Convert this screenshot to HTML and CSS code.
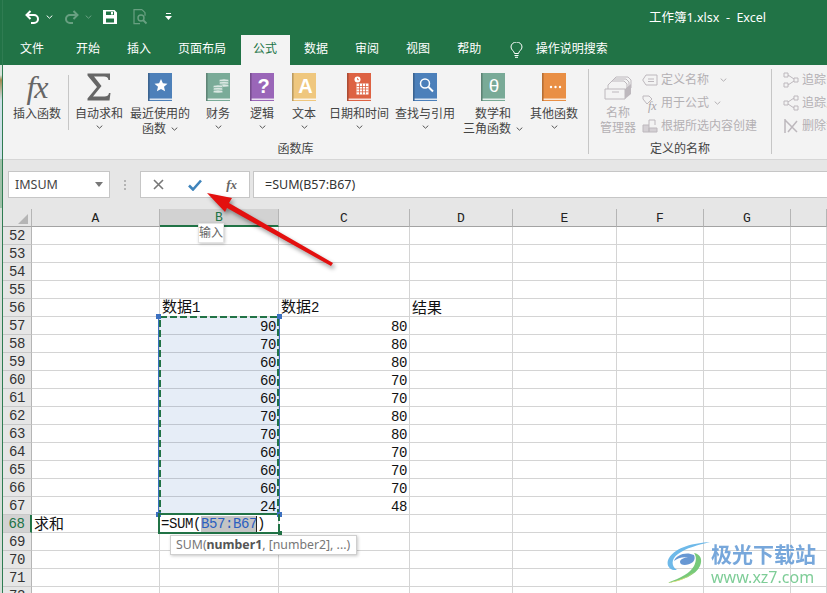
FILE: index.html
```html
<!DOCTYPE html>
<html lang="zh-CN">
<head>
<meta charset="utf-8">
<title>工作簿1.xlsx - Excel</title>
<link rel="stylesheet" href="styles.css">
</head>
<body>
<svg class="defs" width="0" height="0" aria-hidden="true">
  <symbol id="book" viewBox="0 0 24 28">
    <rect width="24" height="28" fill="currentColor"/>
    <rect width="1.6" height="28" fill="#000" opacity=".22"/>
    <rect x="1.6" y="25.6" width="22.4" height="1.2" fill="#fff"/>
  </symbol>
  <symbol id="chev" viewBox="0 0 7 4">
    <path d="M.7.6 3.5 3.2 6.3.6" fill="none" stroke="currentColor" stroke-width="1"/>
  </symbol>
</svg>
<div class="strip"></div>
<div class="main">
  <header class="titlebar">
    <div class="qat">
      <svg class="qi undo" width="15" height="14" viewBox="0 0 15 14"><path d="M5.500 1 1.500 5l4 4" fill="none" stroke="currentColor" stroke-width="2"/><path d="M2 5h7a4 4 0 0 1 0 8H6" fill="none" stroke="currentColor" stroke-width="2"/></svg>
      <svg class="qc" width="7" height="4"><use href="#chev"/></svg>
      <svg class="qi redo dim" width="15" height="14" viewBox="0 0 15 14"><path d="M9.500 1l4 4-4 4" fill="none" stroke="currentColor" stroke-width="2"/><path d="M13 5H6a4 4 0 0 0 0 8h3" fill="none" stroke="currentColor" stroke-width="2"/></svg>
      <svg class="qc dim" width="7" height="4"><use href="#chev"/></svg>
      <svg class="qi save" width="14" height="14" viewBox="0 0 14 14"><path fill-rule="evenodd" fill="currentColor" d="M0 0h11.500L14 2.500V14H0zM3 1.500V5h8V1.500zM3 8.500V12.500h8V8.500z"/><rect x="8" y="2" width="2" height="2.500" fill="currentColor"/></svg>
      <svg class="qi prev dim" width="15" height="16" viewBox="0 0 15 16"><path d="M9 .7H1v14h6M9 .7l3 3v3" fill="none" stroke="currentColor" stroke-width="1.200"/><circle cx="8" cy="9" r="3" fill="none" stroke="currentColor" stroke-width="1.400"/><path d="m10 11 3.500 3.500" stroke="currentColor" stroke-width="1.800"/></svg>
      <svg class="qi cust" width="7" height="7" viewBox="0 0 7 7"><rect x="1" width="5" height="1" fill="currentColor"/><path d="M0 3h7L3.500 7z" fill="currentColor"/></svg>
    </div>
    <div class="doc">工作簿1.xlsx &nbsp;-&nbsp; Excel</div>
  </header>
  <nav class="tabs">
    <span class="tab first">文件</span>
    <span class="tab">开始</span>
    <span class="tab">插入</span>
    <span class="tab">页面布局</span>
    <span class="tab active">公式</span>
    <span class="tab">数据</span>
    <span class="tab">审阅</span>
    <span class="tab">视图</span>
    <span class="tab">帮助</span>
    <span class="tell">
      <svg width="13" height="16" viewBox="0 0 13 16"><path d="M4.500 11.500C4.300 9 1 8 1 5a5.500 5 0 0 1 11 0c0 3-3.300 4-3.500 6.500z" fill="none" stroke="currentColor"/><path d="M4.500 13.500h4M5 15.300h3" stroke="currentColor"/></svg>
      操作说明搜索
    </span>
  </nav>
  <section class="ribbon">
    <div class="group lib">
      <div class="cmds">
        <div class="btn w-fx"><span class="fxbig">fx</span><span class="lbl">插入函数</span></div>
        <span class="vsep inner"></span>
        <div class="btn w-sum">
          <svg class="ic" width="24" height="28" viewBox="0 0 24 28"><path d="M.5.5H23V7h-1.500C21 4 19.500 3.500 17 3.500H7L14.500 13 6 23.500h11.500c2.500 0 4-.8 4.500-3.500h1.500L22.500 27.500H.5v-2L10 14 .5 2.500z" fill="#666"/></svg>
          <span class="lbl">自动求和</span><svg class="chev" width="7" height="4"><use href="#chev"/></svg>
        </div>
        <div class="btn w-rec">
          <svg class="ic c-blue" width="24" height="28"><use href="#book"/><path d="m13 6 1.900 4.300 4.600.4-3.500 3 1.100 4.600-4.100-2.400-4.100 2.400 1.100-4.600-3.500-3 4.600-.4z" fill="#fff"/></svg>
          <span class="lbl">最近使用的<br>函数 <svg class="chev in" width="7" height="4"><use href="#chev"/></svg></span>
        </div>
        <div class="btn w-fin">
          <svg class="ic c-teal" width="24" height="28"><use href="#book"/><g fill="#fff" opacity=".72" stroke="#7aab98" stroke-width=".6"><ellipse cx="18" cy="7.500" rx="5" ry="1.600"/><ellipse cx="18" cy="10" rx="5" ry="1.600"/><ellipse cx="18" cy="12.500" rx="5" ry="1.600"/><ellipse cx="12" cy="13.500" rx="5" ry="1.600"/><ellipse cx="12" cy="16" rx="5" ry="1.600"/><ellipse cx="12" cy="18.500" rx="5" ry="1.600"/></g></svg>
          <span class="lbl">财务</span><svg class="chev" width="7" height="4"><use href="#chev"/></svg>
        </div>
        <div class="btn w-log">
          <svg class="ic c-purple" width="24" height="28"><use href="#book"/><text class="bg-q" x="13.500" y="20">?</text></svg>
          <span class="lbl">逻辑</span><svg class="chev" width="7" height="4"><use href="#chev"/></svg>
        </div>
        <div class="btn w-txt">
          <svg class="ic c-yellow" width="24" height="28"><use href="#book"/><text class="bg-a" x="13.500" y="20">A</text></svg>
          <span class="lbl">文本</span><svg class="chev" width="7" height="4"><use href="#chev"/></svg>
        </div>
        <div class="btn w-dat">
          <svg class="ic c-red" width="24" height="28"><use href="#book"/><circle cx="10.500" cy="6.500" r="3" fill="#fff"/><path d="M10.500 5v1.700h1.500" stroke="#dd6243" fill="none" stroke-width=".8"/><path fill="#fff" d="M9.500 10.500h12v11h-12z"/><path d="M12.500 10.500v11M15.500 10.500v11M18.500 10.500v11M9.500 13.500h12M9.500 16h12M9.500 18.800h12" stroke="#dd6243" stroke-width=".8"/></svg>
          <span class="lbl">日期和时间</span><svg class="chev" width="7" height="4"><use href="#chev"/></svg>
        </div>
        <div class="btn w-look">
          <svg class="ic c-blue2" width="24" height="28"><use href="#book"/><circle cx="12" cy="10.500" r="4.500" fill="none" stroke="#fff" stroke-width="1.500"/><path d="m15.500 14 4.500 4.500" stroke="#fff" stroke-width="2"/></svg>
          <span class="lbl">查找与引用</span><svg class="chev" width="7" height="4"><use href="#chev"/></svg>
        </div>
        <div class="btn w-math">
          <svg class="ic c-teal2" width="24" height="28"><use href="#book"/><text class="bg-t" x="13" y="19">θ</text></svg>
          <span class="lbl">数学和<br>三角函数 <svg class="chev in" width="7" height="4"><use href="#chev"/></svg></span>
        </div>
        <div class="btn w-oth">
          <svg class="ic c-orange" width="24" height="28"><use href="#book"/><circle cx="9" cy="14" r="1.200" fill="#fff"/><circle cx="13.500" cy="14" r="1.200" fill="#fff"/><circle cx="18" cy="14" r="1.200" fill="#fff"/></svg>
          <span class="lbl">其他函数</span><svg class="chev" width="7" height="4"><use href="#chev"/></svg>
        </div>
      </div>
      <div class="glabel">函数库</div>
    </div>
    <span class="vsep"></span>
    <div class="group names">
      <div class="cmds">
        <div class="btn off w-mgr">
          <svg class="ic" width="28" height="24" viewBox="0 0 28 24"><g fill="#f3f3f3" stroke="#bdb8bd"><path d="M8 5 12 1h12l3 3v8H8z"/><path d="M6 7l4-4h12l3 3v8H6z"/><path d="M4 9l4-4h12l3 3v8H4z"/></g><path d="M1 13h20v10H1z" fill="#f3f3f3" stroke="#bdb8bd"/><path d="M21 13l6-5v10l-6 5z" fill="#bdb8bd"/><path d="M8 16h7" stroke="#bdb8bd"/></svg>
          <span class="lbl">名称<br>管理器</span>
        </div>
        <div class="smalls">
          <div class="sm"><svg width="16" height="12" viewBox="0 0 16 12"><path d="M4 1h11v10H4L.7 6z" fill="none" stroke="#bdb8bd"/><path d="M6 5h6M6 7.500h6" stroke="#bdb8bd"/></svg><span>定义名称</span><svg class="chev m1" width="7" height="4"><use href="#chev"/></svg></div>
          <div class="sm"><svg width="16" height="16" viewBox="0 0 16 16"><path d="M1 4V1h6l3 3-5 5z" fill="none" stroke="#bdb8bd"/><text class="sfx" x="6" y="15">fx</text></svg><span>用于公式</span><svg class="chev m2" width="7" height="4"><use href="#chev"/></svg></div>
          <div class="sm"><svg width="16" height="14" viewBox="0 0 16 14"><path d="M1 6h6v7H1zM7 9h8v4H7z" fill="#d4d0d4" stroke="#bdb8bd"/><path d="M7 6V1h6v5" fill="none" stroke="#bdb8bd"/></svg><span>根据所选内容创建</span></div>
        </div>
      </div>
      <div class="glabel">定义的名称</div>
    </div>
    <span class="vsep"></span>
    <div class="group audit">
      <div class="smalls">
        <div class="sm"><svg width="16" height="16" viewBox="0 0 16 16"><g fill="none" stroke="#bdb8bd"><path d="M1 1h4v4H1zM1 11h4v4H1zM11 6h4v4h-4zM5 3l6 4M5 13l6-4"/></g></svg><span>追踪引用单元格</span></div>
        <div class="sm"><svg width="16" height="16" viewBox="0 0 16 16"><g fill="none" stroke="#bdb8bd"><path d="M11 1h4v4h-4zM11 11h4v4h-4zM1 6h4v4H1zM5 7l6-4M5 9l6 4"/></g></svg><span>追踪从属单元格</span></div>
        <div class="sm"><svg width="16" height="16" viewBox="0 0 16 16"><g fill="none" stroke="#bdb8bd" stroke-width="1.500"><path d="M2 1v14M2 2l12 12M14 3 5 14"/></g></svg><span>删除箭头</span></div>
      </div>
    </div>
  </section>
  <section class="fbar">
    <div class="namebox"><span>IMSUM</span><i class="tri"></i></div>
    <svg class="dots" width="3" height="10"><rect width="2" height="2"/><rect y="4" width="2" height="2"/><rect y="8" width="2" height="2"/></svg>
    <div class="fbtns">
      <svg width="11" height="11" viewBox="0 0 11 11"><path d="m1 1 9 9M10 1l-9 9" stroke="#777" stroke-width="1.600"/></svg>
      <svg width="14" height="12" viewBox="0 0 14 12"><path d="m1 6.500 4 4L13 1.500" fill="none" stroke="#3f84bb" stroke-width="2.600"/></svg>
      <span class="ffx">fx</span>
    </div>
    <div class="finput">=SUM(B57:B67)</div>
  </section>
  <section class="sheet">
    <table class="grid">
      <colgroup><col class="c0"><col class="ca"><col class="cb"><col class="cc"><col class="cd"><col class="ce"><col class="cf"><col class="cg"><col class="ch"></colgroup>
      <thead><tr><th class="corner"><svg width="11" height="11"><path d="M0 10 10 0v10z" fill="#b5b5b5"/></svg></th><th>A</th><th class="hot">B</th><th>C</th><th>D</th><th>E</th><th>F</th><th>G</th><th></th></tr></thead>
      <tbody>
        <tr><th>52</th><td></td><td></td><td></td><td></td><td></td><td></td><td></td><td></td></tr>
        <tr><th>53</th><td></td><td></td><td></td><td></td><td></td><td></td><td></td><td></td></tr>
        <tr><th>54</th><td></td><td></td><td></td><td></td><td></td><td></td><td></td><td></td></tr>
        <tr><th>55</th><td></td><td></td><td></td><td></td><td></td><td></td><td></td><td></td></tr>
        <tr><th>56</th><td></td><td>数据<span class="m">1</span></td><td>数据<span class="m">2</span></td><td>结果</td><td></td><td></td><td></td><td></td></tr>
        <tr><th>57</th><td></td><td class="sel">90</td><td class="num">80</td><td></td><td></td><td></td><td></td><td></td></tr>
        <tr><th>58</th><td></td><td class="sel">70</td><td class="num">80</td><td></td><td></td><td></td><td></td><td></td></tr>
        <tr><th>59</th><td></td><td class="sel">60</td><td class="num">80</td><td></td><td></td><td></td><td></td><td></td></tr>
        <tr><th>60</th><td></td><td class="sel">60</td><td class="num">70</td><td></td><td></td><td></td><td></td><td></td></tr>
        <tr><th>61</th><td></td><td class="sel">60</td><td class="num">70</td><td></td><td></td><td></td><td></td><td></td></tr>
        <tr><th>62</th><td></td><td class="sel">70</td><td class="num">80</td><td></td><td></td><td></td><td></td><td></td></tr>
        <tr><th>63</th><td></td><td class="sel">70</td><td class="num">80</td><td></td><td></td><td></td><td></td><td></td></tr>
        <tr><th>64</th><td></td><td class="sel">60</td><td class="num">70</td><td></td><td></td><td></td><td></td><td></td></tr>
        <tr><th>65</th><td></td><td class="sel">60</td><td class="num">70</td><td></td><td></td><td></td><td></td><td></td></tr>
        <tr><th>66</th><td></td><td class="sel">60</td><td class="num">70</td><td></td><td></td><td></td><td></td><td></td></tr>
        <tr><th>67</th><td></td><td class="sel">24</td><td class="num">48</td><td></td><td></td><td></td><td></td><td></td></tr>
        <tr><th class="hotrow">68</th><td>求和</td><td class="edit"><span class="m">=SUM(</span><span class="m ref">B57:B67</span><span class="m">)</span></td><td></td><td></td><td></td><td></td><td></td><td></td></tr>
        <tr><th>69</th><td></td><td></td><td></td><td></td><td></td><td></td><td></td><td></td></tr>
        <tr><th>70</th><td></td><td></td><td></td><td></td><td></td><td></td><td></td><td></td></tr>
        <tr><th>71</th><td></td><td></td><td></td><td></td><td></td><td></td><td></td><td></td></tr>
        <tr><th>72</th><td></td><td></td><td></td><td></td><td></td><td></td><td></td><td></td></tr>
      </tbody>
    </table>
    <div class="range">
      <svg width="122" height="199" viewBox="0 0 122 199"><path d="M.5 0V199M121.500 0V199" stroke="#3c70c0"/><rect x="2" y="1" width="118" height="197" fill="none" stroke="#217346" stroke-width="2" stroke-dasharray="7 3"/></svg>
      <i class="h tl"></i><i class="h tr"></i><i class="h bl"></i><i class="h br"></i>
    </div>
    <div class="active-cell">
      <svg width="122" height="21" viewBox="0 0 122 21"><path d="M1 0V20H122" fill="none" stroke="#217346" stroke-width="2"/><path d="M1 1H121V20" fill="none" stroke="#217346" stroke-width="2" stroke-dasharray="7 3"/></svg>
      <i class="grip"></i>
    </div>
    <div class="tip t-enter">输入</div>
    <div class="tip t-sum">SUM(<b>number1</b>, [number2], ...)</div>
  </section>
</div>
<svg class="arrow" width="150" height="90" viewBox="0 0 150 90"><path d="M7 8 32 13 29 18 133 78 131 81 27 23 25 27z" fill="#e3100f"/></svg>
<div class="mark">
  <svg class="swirl" width="44" height="42" viewBox="0 0 44 42">
    <path d="M44 1C28 2 10 6 3 17c-4 7 1 13 8 12C5 25 5 18 12 13 20 7 32 4 44 1z" fill="#62b4e8"/>
    <path d="M28 14C20 10 10 14 8 20c4-3 10-5 15-3-4-1-9 1-9 4 0 4 8 4 13 0 2-2 2-5 1-7z" fill="#5b8fd0"/>
    <path d="M28 12c6 1 9 6 6 13-4 9-18 15-33 17 14-5 23-10 27-17 2-4 3-9 0-13z" fill="#6cc56f"/>
    <path d="M1 42c10-2 20-5 27-11-6 6-16 10-27 11z" fill="#e0d964"/>
  </svg>
  <div class="marktext"><b>极光下载站</b><span>www.xz7.com</span></div>
</div>
</body>
</html>
```

FILE: styles.css
```css
* { box-sizing: border-box; }
html, body { margin: 0; padding: 0; }
body {
  position: relative;
  display: flex;
  width: 827px;
  height: 593px;
  overflow: hidden;
  background: #fff;
  color: #444;
  font: 12px/15px "Noto Sans", "Noto Sans CJK SC", sans-serif;
}
.defs { position: absolute; }
.strip {
  flex: 0 0 3px;
  background: linear-gradient(#217346 0 65px, #d8e4dc 65px 75px, #a08a50 80px, #cfe0e8 100px 159px, #9fc0a8 159px 208px, #d7ded9 208px);
  border-right: 1px solid #2f7c52;
}
.main { flex: 1; min-width: 0; display: flex; flex-direction: column; }

/* title bar */
.titlebar {
  height: 35px;
  flex: none;
  display: flex;
  align-items: center;
  justify-content: space-between;
  background: #217346;
  color: #fff;
  padding: 0 61px 2px 22px;
}
.qat { display: flex; align-items: center; color: #fff; }
.qat .dim { opacity: .32; }
.qc { margin: 0 0 0 6px; }
.qi.redo { margin-left: 11px; }
.qi.save { margin-left: 11px; }
.qi.prev { margin-left: 16px; }
.qi.cust { margin-left: 17px; }
.doc { font-size: 12.5px; margin-top: 1px; }

/* tabs */
.tabs {
  height: 30px;
  flex: none;
  display: flex;
  align-items: stretch;
  gap: 2px;
  background: #217346;
  color: #fff;
}
.tab { padding: 6px 12.5px 0; }
.tab.first { padding-left: 17px; padding-right: 17.5px; }
.tab.active { background: #f3f3f3; color: #217346; }
.tell { display: flex; align-items: center; gap: 13px; margin-left: 14px; padding-bottom: 3px; }
.tell svg { margin-top: 3px; }

/* ribbon */
.ribbon {
  height: 95px;
  flex: none;
  display: flex;
  background: #f3f3f3;
  border-bottom: 1px solid #d6d6d6;
  overflow: hidden;
  color: #444;
}
.group { flex: none; display: flex; flex-direction: column; position: relative; }
.cmds { display: flex; height: 76px; }
.glabel { text-align: center; line-height: 15px; }
.lib { width: 585px; padding: 0 5px; }
.names { width: 182px; }
.audit { width: 60px; padding-left: 11px; }
.vsep { flex: none; width: 1px; margin: 4px 0 5px; background: #c6c6c6; }
.vsep.inner { height: 55px; margin: 10px 1px 0 2px; }
.btn { flex: none; display: flex; flex-direction: column; align-items: center; padding-top: 8px; text-align: center; white-space: nowrap; }
.btn .ic { flex: none; margin-bottom: 4.5px; display: block; }
.lbl { display: block; }
.chev { display: block; color: #555; margin-top: 4px; }
.chev.in { display: inline-block; margin: 0 0 2px 2px; }
.off { color: #b3b0b3; }
.w-fx { width: 58px; }
.fxbig { height: 32.5px; font: italic 32px/28px "Liberation Serif", serif; color: #666; letter-spacing: -1px; }
.w-sum { width: 54px; margin-left: 2px; }
.w-rec { width: 60px; margin-left: 4px; }
.w-fin { width: 44px; margin-left: 6px; }
.w-log { width: 44px; }
.w-txt { width: 40px; }
.w-dat { width: 62px; margin-left: 4px; }
.w-look { width: 62px; margin-left: 4px; }
.w-math { width: 62px; margin-left: 6px; }
.w-oth { width: 60px; }
.c-blue { color: #4d80b9; }
.c-teal { color: #7aab98; }
.c-purple { color: #9a66b8; }
.c-yellow { color: #efc77e; }
.c-red { color: #dd6243; }
.c-blue2 { color: #4c80ba; }
.c-teal2 { color: #79aa97; }
.c-orange { color: #e98f45; }
.bg-q, .bg-a, .bg-t { fill: #fff; text-anchor: middle; font-family: "Liberation Sans", sans-serif; font-weight: 700; font-size: 20px; }
.bg-t { font-weight: 400; font-size: 19px; }
.sfx { fill: #a9a5a9; font: italic 12px "Liberation Serif", serif; }

.names .cmds { padding-left: 11px; }
.w-mgr { width: 36px; }
.w-mgr .ic { margin: 3px 0 5px; }
.smalls { display: flex; flex-direction: column; margin: 3px 0 0 6px; color: #b3b0b3; }
.sm { height: 23px; display: flex; align-items: center; white-space: nowrap; }
.sm svg { overflow: visible; }
.sm svg:first-child { flex: 0 0 16px; margin-right: 3px; }
.sm .m1 { margin: 0 0 0 11px; color: #b3b0b3; }
.sm .m2 { margin: 0 0 0 5px; color: #b3b0b3; }
.audit .smalls { margin-left: 0; }

/* formula bar */
.fbar {
  height: 49px;
  flex: none;
  display: flex;
  align-items: flex-start;
  padding-top: 11px;
  background: #e6e6e6;
}
.namebox {
  width: 102px; height: 27px; margin-left: 5px;
  display: flex; align-items: center; justify-content: space-between;
  padding: 0 7px 0 6px;
  background: #fff; border: 1px solid #c6c6c6;
  font-size: 12.5px; color: #444;
}
.tri { border: 4px solid transparent; border-top: 5px solid #777; border-bottom: 0; margin-right: -1px; }
.dots { margin: 9px 13px 0 14px; fill: #b4b4b4; }
.fbtns {
  width: 110px; height: 27px;
  display: flex; align-items: center; justify-content: space-between;
  padding: 0 12px;
  background: #fff; border: 1px solid #c6c6c6;
}
.ffx { font: italic 700 13px "Liberation Serif", serif; color: #666; }
.finput {
  flex: 1; height: 27px; margin-left: 3px; padding: 0 11px;
  background: #fff; border: 1px solid #c6c6c6; border-right: 0;
  font-size: 12.5px; line-height: 25px; color: #333;
}

/* sheet */
.sheet { position: relative; flex: 1; min-height: 0; overflow: hidden; background: #fff; }
.grid { table-layout: fixed; width: 824px; border-collapse: separate; border-spacing: 0; color: #111; }
.c0 { width: 29px; } .ca { width: 128px; } .cb { width: 119px; } .cc { width: 131px; }
.cd { width: 103px; } .ce { width: 104px; } .cf { width: 87px; } .cg { width: 87px; } .ch { width: 36px; }
.grid tr { height: 18px; }
.grid th, .grid td {
  height: 18px; padding: 0 2px;
  border-right: 1px solid #d4d4d4; border-bottom: 1px solid #d4d4d4;
  white-space: nowrap;
}
.grid td { font: 15px/12px "Noto Sans CJK SC", sans-serif; padding: 0 0 2px 2px; vertical-align: middle; }
.grid thead th {
  font: 400 13px/13px "Liberation Mono", monospace; color: #222;
  background: #e6e6e6; padding-top: 1px;
  border-bottom: 1px solid #a3a3a3; border-right: 1px solid #b5b5b5;
}
.grid tbody th {
  font: 400 14px/13px "Liberation Mono", monospace; letter-spacing: -.4px; color: #333;
  background: #e6e6e6; padding-top: 1px;
  border-right: 1px solid #b5b5b5; border-bottom: 1px solid #c8c8c8;
}
.grid .corner { padding: 0 0 0 15px; text-align: left; }
.corner svg { display: block; margin-top: 3px; }
.grid thead .hot { background: #d2d2d2; color: #217346; border-bottom: 2px solid #217346; }
.grid tbody .hotrow { background: #d2d2d2; color: #217346; border-right: 2px solid #217346; }
.m { font: 14px/12px "Liberation Mono", monospace; letter-spacing: -.4px; }
.grid .num, .grid .sel {
  font: 14px/14px "Liberation Mono", monospace; letter-spacing: -.4px;
  text-align: right; padding: 3px 2px 0 0;
}
.grid .sel { background: #e6edf7; border-bottom-color: #c0c6d0; }
.grid .edit { padding-left: 1px; }
.ref { color: #2a5fc0; background: #c4c4c4; box-shadow: inset -1px 0 #222; }

.range { position: absolute; left: 155px; top: 107px; width: 122px; height: 199px; }
.range svg, .active-cell svg { display: block; }
.h { position: absolute; width: 5px; height: 5px; background: #3c70c0; }
.tl { left: -2px; top: -2px; } .tr { right: -2px; top: -2px; }
.bl { left: -2px; bottom: -2px; } .br { right: -2px; bottom: -2px; }
.active-cell { position: absolute; left: 155px; top: 304px; width: 122px; height: 21px; }
.grip { position: absolute; right: -2px; bottom: -1px; width: 4px; height: 4px; background: #217346; }
.tip {
  position: absolute; background: #fff; border: 1px solid #cfcfcf;
  box-shadow: 1px 1px 3px rgba(0,0,0,.22); color: #666; white-space: nowrap;
}
.t-enter { left: 195px; top: 14px; width: 26px; height: 20px; line-height: 18px; text-align: center; border-color: #e4e4e4; }
.t-sum { left: 167px; top: 326px; width: 187px; height: 20px; line-height: 18px; padding-left: 5px; color: #777; font-size: 12.3px; }
.t-sum b { color: #555; }

/* overlays */
.arrow { position: absolute; left: 200px; top: 185px; filter: drop-shadow(2px 3px 2px rgba(0,0,0,.4)); }
.mark { position: absolute; left: 666px; top: 541px; display: flex; filter: blur(.4px); opacity: .92; }
.swirl { flex: none; }
.marktext { display: flex; flex-direction: column; margin: 0 0 0 1px; white-space: nowrap; }
.marktext b { font: 700 21px/24px "Noto Sans CJK SC", sans-serif; color: #6ca0d8; }
.marktext span { font: 16px/20px "Noto Sans", sans-serif; color: #74c98f; margin-top: 2px; }
```
